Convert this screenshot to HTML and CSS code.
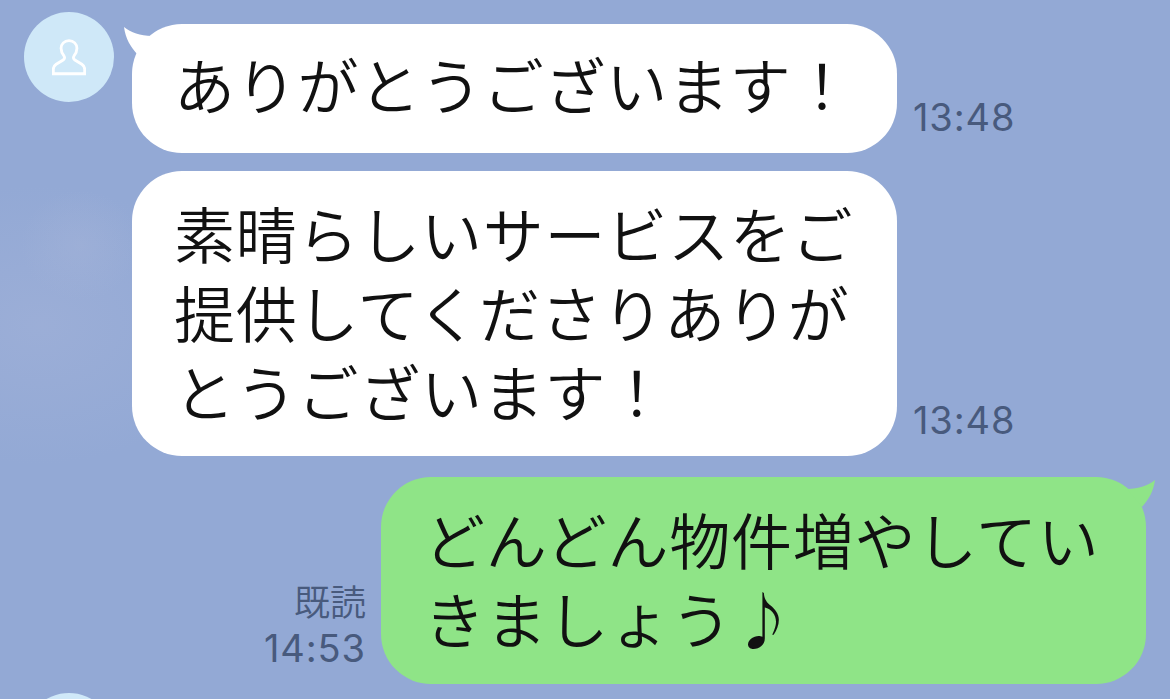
FILE: index.html
```
<!DOCTYPE html>
<html lang="ja">
<head>
    <meta charset="UTF-8">
    <meta name="viewport" content="width=device-width, initial-scale=1.0">
    <title>トーク</title>
    <link rel="stylesheet" href="styles.css">
</head>
<body>
    <div class="chat">
        <!-- Received -->
        <div class="row received">
            <div class="avatar">
                <svg width="34" height="37" viewBox="0 0 36 39" fill="none" stroke="#fff" stroke-width="3">
                    <path d="M18 1.6C13 1.6 9.6 5.3 9.6 9.8c0 3.4 1.3 5.8 3.1 8.1 1 1.4.7 3.2-.9 4.2L4.4 26.600C2.200 28 1.400 29.500 1.400 32v4.700h33.200V32c0-2.500-.8-4-3-5.400L24.200 22.100c-1.600-1-1.900-2.800-.9-4.200 1.800-2.300 3.100-4.700 3.100-8.100C26.400 5.300 23 1.600 18 1.600z"/>
                </svg>
            </div>
            <div class="bubble">
                <svg class="tail" width="40" height="40" viewBox="0 0 40 40">
                    <path d="M0 0c7 5.500 16 9 28 9L13 27C7 20 1.500 12 0 0z"/>
                </svg>
                <p>ありがとうございます！</p>
            </div>
            <div class="meta"><span class="time">13:48</span></div>
        </div>

        <div class="row received next">
            <div class="bubble">
                <p>素晴らしいサービスをご<br>提供してくださりありが<br>とうございます！</p>
            </div>
            <div class="meta"><span class="time">13:48</span></div>
        </div>

        <!-- Sent -->
        <div class="row sent">
            <div class="meta">
                <span class="read">既読</span>
                <span class="time">14:53</span>
            </div>
            <div class="bubble">
                <svg class="tail" width="40" height="40" viewBox="0 0 40 40">
                    <path d="M40 0c-7 5.500-16 9-28 9l15 18C33 20 38.500 12 40 0z"/>
                </svg>
                <p>どんどん物件増やしてい<br>きましょう<span class="note">♪</span></p>
            </div>
        </div>

        <div class="row received last">
            <div class="avatar"></div>
        </div>
    </div>
</body>
</html>
```
FILE: styles.css
```
* {
    margin: 0;
    padding: 0;
    box-sizing: border-box;
}

body {
    font-family: "Noto Sans CJK JP", sans-serif;
    color: #111;
}

.chat {
    height: 699px;
    padding-top: 12px;
    overflow: hidden;
    background-color: #93a9d5;
    /* faint clouds on the left */
    background-image:
        radial-gradient(ellipse 60px 55px at 80px 245px, rgba(168, 182, 217, 0.35), transparent),
        radial-gradient(ellipse 190px 140px at 40px 325px, rgba(164, 179, 217, 0.5), transparent);
}

.row {
    display: flex;
    align-items: flex-end;
}

.received {
    padding-left: 24px;
}

.avatar {
    display: flex;
    align-items: center;
    justify-content: center;
    align-self: flex-start;
    width: 90px;
    height: 90px;
    margin-right: 18px;
    border-radius: 50%;
    background-color: #cfe8f8;
}

.bubble {
    position: relative;
    width: 765px;
    margin-top: 12px;
    padding: 21px 0 30px 42px;
    border-radius: 50px;
    background-color: #fff;
}

.bubble p {
    font-size: 61px;
    font-weight: 350;
    line-height: 78px;
    letter-spacing: 0.75px;
    white-space: nowrap;
}

.tail {
    position: absolute;
    top: 3px;
    left: -8px;
    fill: #fff;
}

.meta {
    display: flex;
    flex-direction: column;
    margin: 0 15px 13px 16px;
    color: #485a7d;
    line-height: 46px;
}

.time {
    font-family: Inter, sans-serif;
    font-size: 38px;
    letter-spacing: 0.9px;
}

.read {
    margin-bottom: 2px;
    font-size: 36px;
    font-weight: 350;
}

.next {
    padding-left: 132px;
    margin-top: 18px;
}

.next .bubble {
    margin-top: 0;
    padding: 22px 0 26px 42px;
}

.next .bubble p {
    line-height: 79px;
}

.sent {
    justify-content: flex-end;
    margin-top: 21px;
    padding-right: 24px;
}

.sent .bubble {
    margin-top: 0;
    padding: 22px 0 27px 43px;
    background-color: #8fe487;
}

.sent .bubble p {
    line-height: 79px;
}

.note {
    font-weight: 700;
}

.sent .tail {
    left: auto;
    right: -9px;
    fill: #8fe487;
}

.sent .meta {
    align-items: flex-end;
}

.last {
    margin-top: 9px;
}
```
